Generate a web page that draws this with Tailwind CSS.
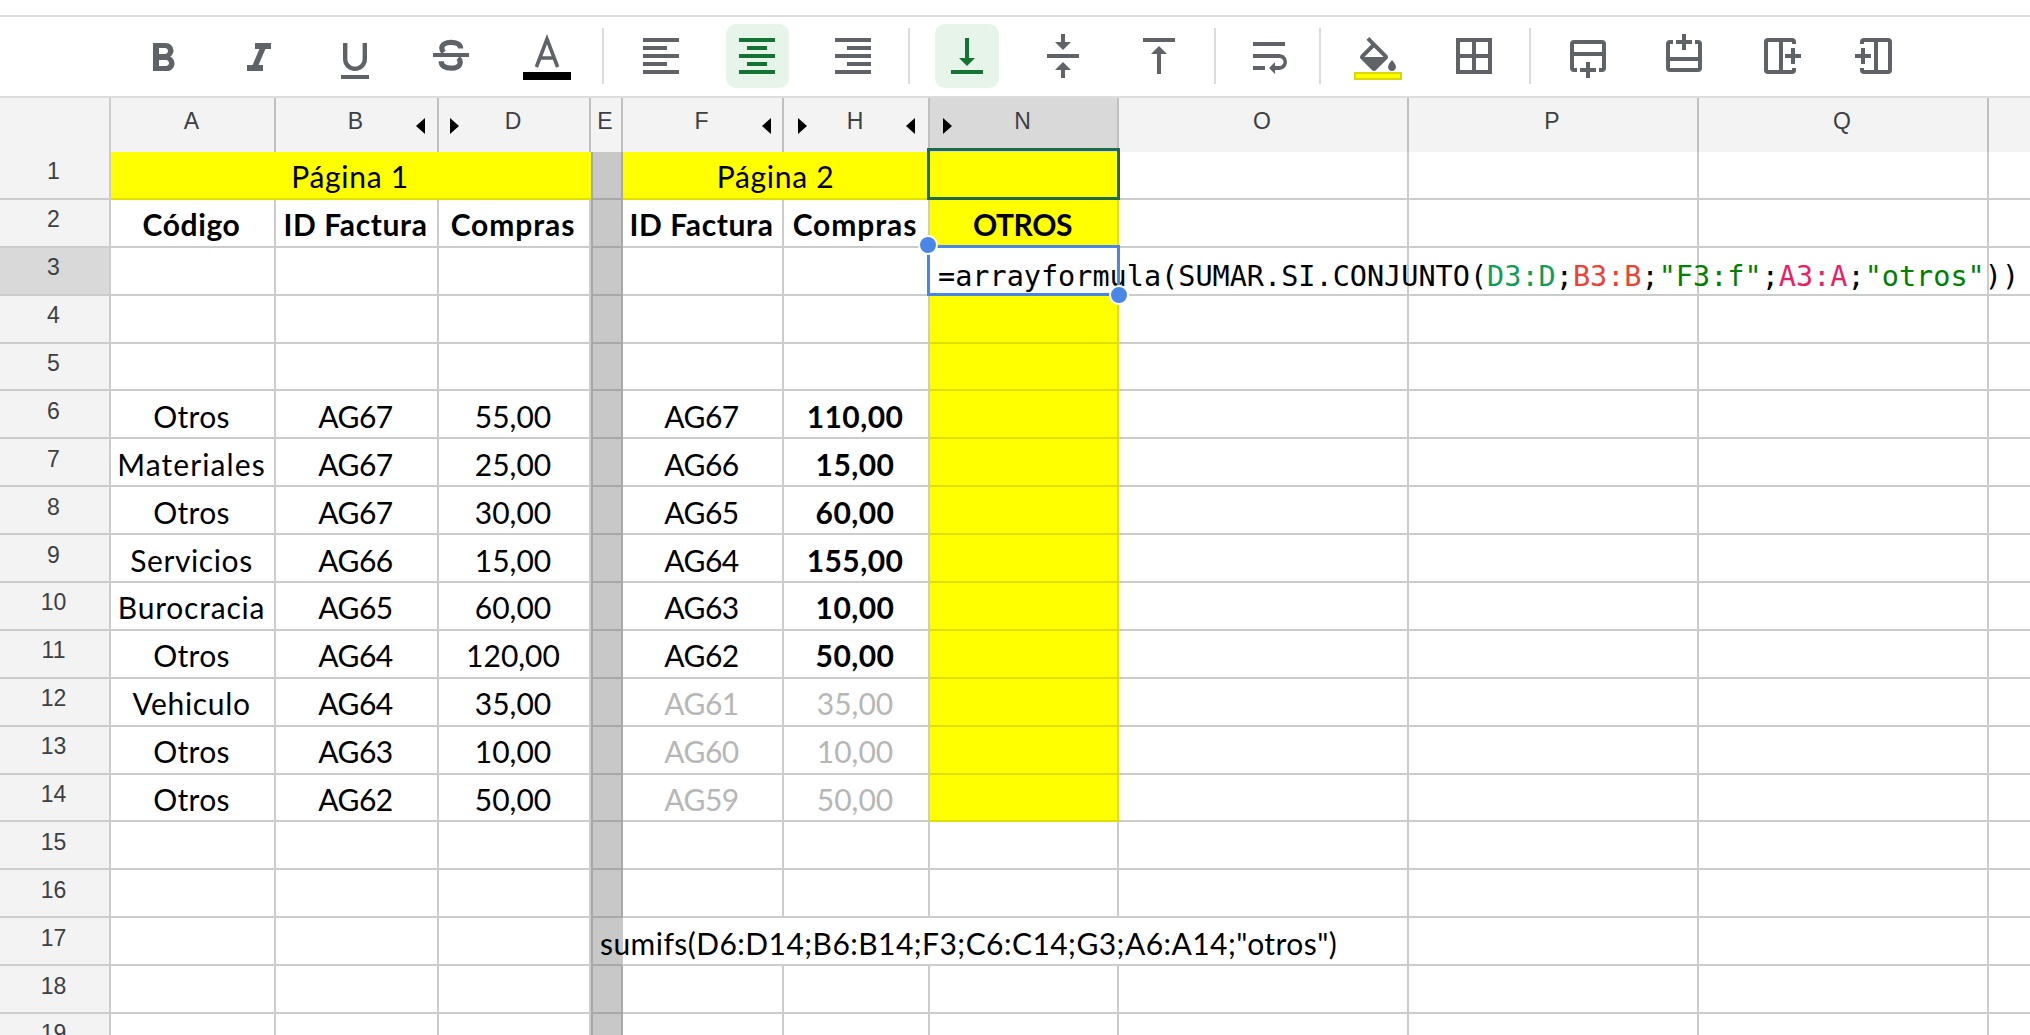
<!DOCTYPE html>
<html lang="es">
<head>
<meta charset="utf-8">
<script src="https://cdn.jsdelivr.net/npm/@tailwindcss/browser@4"></script>
<title>Hoja</title>
</head>
<body class="bg-white overflow-hidden font-['Lato','Carlito',sans-serif] text-black">
<div class="w-[2030px] h-[1035px] overflow-hidden flex flex-col">
  <div class="h-[15px] shrink-0"></div>
  <!-- toolbar -->
  <div class="h-[83px] shrink-0 border-y-2 border-[#dadce0] flex items-center pl-[115px] pb-[2px] text-[#5f6368] [&>span]:flex [&>span]:items-center [&>span]:justify-center [&>span]:h-[64px] [&>span]:w-[96px] [&_svg]:w-[48px] [&_svg]:h-[48px] [&_svg]:fill-current">
    <span><svg viewBox="0 0 24 24"><path transform="translate(0 1.5)" d="M15.6 10.79c.97-.67 1.65-1.77 1.65-2.79 0-2.26-1.75-4-4-4H7v14h7.04c2.09 0 3.71-1.7 3.71-3.79 0-1.52-.86-2.82-2.15-3.42zM10 6.5h3c.83 0 1.5.67 1.5 1.5s-.67 1.5-1.5 1.5h-3v-3zm3.5 9H10v-3h3.5c.83 0 1.5.67 1.5 1.5s-.67 1.5-1.5 1.5z"/></svg></span>
    <span><svg viewBox="0 0 24 24"><path transform="translate(0 1.5)" d="M10 4v3h2.21l-3.42 8H6v3h8v-3h-2.21l3.42-8H18V4z"/></svg></span>
    <span><svg viewBox="0 0 24 24"><path transform="translate(0 2.5)" d="M12 17c3.31 0 6-2.69 6-6V3h-2.2v8c0 2.1-1.7 3.8-3.8 3.8S8.2 13.1 8.2 11V3H6v8c0 3.31 2.69 6 6 6zm-7 2v2h14v-2H5z"/></svg></span>
    <span><svg viewBox="0 0 24 24"><path d="M3 10.5h18v2H3z"/><path class="fill-none stroke-current" stroke-width="2.6" d="M16.8 8.2C16.8 6 14.6 5.2 12 5.2 9.3 5.2 7.4 6.3 7.4 8c0 .8.3 1.4.9 2.2M15.6 13c.7.6 1 1.3 1 2.1 0 2-2 3-4.6 3-2.8 0-4.9-1.1-4.9-3.5"/></svg></span>
    <span><svg viewBox="0 0 24 24"><path class="fill-none stroke-current" stroke-width="1.8" d="M6.7 17.5 12 3.5l5.3 14M8.5 13h7"/><path class="fill-black" d="M0 20h24v4H0z"/></svg></span>
    <i class="block w-[2px] h-[56px] ml-[7px] mr-[9px] bg-[#dadce0]"></i>
    <span><svg viewBox="0 0 24 24"><path d="M15 15H3v2h12v-2zm0-8H3v2h12V7zM3 13h18v-2H3v2zm0 8h18v-2H3v2zM3 3v2h18V3H3z"/></svg></span>
    <span class="text-[#137333]"><b class="flex items-center justify-center w-[63px] h-[64px] rounded-[10px] bg-[#e6f4ea]"><svg viewBox="0 0 24 24"><path d="M7 15v2h10v-2H7zm-4 6h18v-2H3v2zm0-8h18v-2H3v2zm4-6v2h10V7H7zM3 3v2h18V3H3z"/></svg></b></span>
    <span><svg viewBox="0 0 24 24"><path d="M3 21h18v-2H3v2zm6-4h12v-2H9v2zm-6-4h18v-2H3v2zm6-4h12V7H9v2zM3 3v2h18V3H3z"/></svg></span>
    <i class="block w-[2px] h-[56px] ml-[7px] mr-[9px] bg-[#dadce0]"></i>
    <span class="text-[#137333]"><b class="flex items-center justify-center w-[64px] h-[64px] rounded-[10px] bg-[#e6f4ea]"><svg viewBox="0 0 24 24"><path d="M16 13h-3V3h-2v10H8l4 4 4-4zM4 19v2h16v-2H4z"/></svg></b></span>
    <span><svg viewBox="0 0 24 24"><path d="M8 19h3v4h2v-4h3l-4-4-4 4zm8-14h-3V1h-2v4H8l4 4 4-4zM4 11v2h16v-2H4z"/></svg></span>
    <span><svg viewBox="0 0 24 24"><path d="M8 11h3v10h2V11h3l-4-4-4 4zM4 3v2h16V3H4z"/></svg></span>
    <i class="block w-[2px] h-[56px] ml-[7px] mr-[9px] bg-[#dadce0]"></i>
    <span class="!w-[88px]"><svg viewBox="0 0 24 24"><path d="M4 19h6v-2H4v2zM20 5H4v2h16V5zm-3 6H4v2h13.25c1.1 0 2 .9 2 2s-.9 2-2 2H15v-2l-3 3 3 3v-2h2c2.21 0 4-1.79 4-4s-1.79-4-4-4z"/></svg></span>
    <i class="block w-[2px] h-[56px] ml-[6px] mr-[9px] bg-[#dadce0]"></i>
    <span><svg viewBox="0 0 24 24"><path transform="translate(0 2.5)" d="M16.56 8.94L7.62 0 6.21 1.41l2.38 2.38-5.15 5.15c-.59.59-.59 1.54 0 2.12l5.5 5.5c.29.29.68.44 1.06.44s.77-.15 1.06-.44l5.5-5.5c.59-.58.59-1.53 0-2.12zM5.21 10L10 5.21 14.79 10H5.21zM19 11.5s-2 2.17-2 3.5c0 1.1.9 2 2 2s2-.9 2-2c0-1.33-2-3.5-2-3.5z"/><path class="fill-[#ffff00] stroke-[#d8d800]" d="M.5 20.5h23v3H.5z"/></svg></span>
    <span><svg viewBox="0 0 24 24"><path d="M3 3v18h18V3H3zm8 16H5v-6h6v6zm0-8H5V5h6v6zm8 8h-6v-6h6v6zm0-8h-6V5h6v6z"/></svg></span>
    <i class="block w-[2px] h-[56px] ml-[7px] mr-[9px] bg-[#dadce0]"></i>
    <span><svg viewBox="0 0 24 24"><path class="fill-none stroke-current" stroke-width="2" d="M6.5 19H5a1 1 0 0 1-1-1V6a1 1 0 0 1 1-1h14a1 1 0 0 1 1 1v12a1 1 0 0 1-1 1h-1.5M4 11h16M12 15v8M8 19h8"/></svg></span>
    <span><svg viewBox="0 0 24 24"><path class="fill-none stroke-current" stroke-width="2" d="M6.5 5H5a1 1 0 0 0-1 1v12a1 1 0 0 0 1 1h14a1 1 0 0 0 1-1V6a1 1 0 0 0-1-1h-1.5M4 13.5h16M12 1v8M8 5h8"/></svg></span>
    <span><svg viewBox="0 0 24 24"><path class="fill-none stroke-current" stroke-width="2" d="M19 6V5a1 1 0 0 0-1-1H6a1 1 0 0 0-1 1v14a1 1 0 0 0 1 1h12a1 1 0 0 0 1-1v-1M12.5 4v16M14.5 12h8M18.5 8v8"/></svg></span>
    <span><svg viewBox="0 0 24 24"><path class="fill-none stroke-current" stroke-width="2" d="M5 6V5a1 1 0 0 1 1-1h12a1 1 0 0 1 1 1v14a1 1 0 0 1-1 1H6a1 1 0 0 1-1-1v-1M12 4v16M1.5 12h8M5.5 8v8"/></svg></span>
  </div>
  <!-- sheet -->
  <div class="relative grid grid-cols-[111px_165px_163px_152px_32px_161px_146px_189px_290px_290px_290px_41px] grid-rows-[54px_repeat(19,47.9px)] text-[30px] leading-none [&>div]:flex [&>div]:items-center [&>div]:justify-center [&>div]:border-r-2 [&>div]:border-b-2 [&>div]:border-[#cccccc] [&>div]:pt-[3px] [&>div]:pr-[2px] [&>div]:whitespace-nowrap">
    <!-- headers -->
    <div class="bg-[#f3f3f3] !border-b-0"></div>
    <div class="bg-[#f3f3f3] !border-b-0 !pt-0 pb-[7px] font-['Liberation_Sans'] text-[23px] text-[#3c4043] !border-[#c0c0c0]">A</div>
    <div class="bg-[#f3f3f3] !border-b-0 !pt-0 pb-[7px] font-['Liberation_Sans'] text-[23px] text-[#3c4043] !border-[#c0c0c0] relative">B<i class="absolute right-[12px] top-[20px] border-y-[8px] border-y-transparent border-r-[9px] border-r-black"></i></div>
    <div class="bg-[#f3f3f3] !border-b-0 !pt-0 pb-[7px] font-['Liberation_Sans'] text-[23px] text-[#3c4043] !border-[#c0c0c0] relative">D<i class="absolute left-[11px] top-[20px] border-y-[8px] border-y-transparent border-l-[9px] border-l-black"></i></div>
    <div class="bg-[#f3f3f3] !border-b-0 !pt-0 pb-[7px] font-['Liberation_Sans'] text-[23px] text-[#3c4043] !border-[#c0c0c0]">E</div>
    <div class="bg-[#f3f3f3] !border-b-0 !pt-0 pb-[7px] font-['Liberation_Sans'] text-[23px] text-[#3c4043] !border-[#c0c0c0] relative">F<i class="absolute right-[11px] top-[20px] border-y-[8px] border-y-transparent border-r-[9px] border-r-black"></i></div>
    <div class="bg-[#f3f3f3] !border-b-0 !pt-0 pb-[7px] font-['Liberation_Sans'] text-[23px] text-[#3c4043] !border-[#c0c0c0] relative">H<i class="absolute left-[14px] top-[20px] border-y-[8px] border-y-transparent border-l-[9px] border-l-black"></i><i class="absolute right-[13px] top-[20px] border-y-[8px] border-y-transparent border-r-[9px] border-r-black"></i></div>
    <div class="bg-[#d9d9d9] !border-b-0 !pt-0 pb-[7px] font-['Liberation_Sans'] text-[23px] text-[#3c4043] !border-[#c0c0c0] relative">N<i class="absolute left-[13px] top-[20px] border-y-[8px] border-y-transparent border-l-[9px] border-l-black"></i></div>
    <div class="bg-[#f3f3f3] !border-b-0 !pt-0 pb-[7px] font-['Liberation_Sans'] text-[23px] text-[#3c4043] !border-[#c0c0c0]">O</div>
    <div class="bg-[#f3f3f3] !border-b-0 !pt-0 pb-[7px] font-['Liberation_Sans'] text-[23px] text-[#3c4043] !border-[#c0c0c0]">P</div>
    <div class="bg-[#f3f3f3] !border-b-0 !pt-0 pb-[7px] font-['Liberation_Sans'] text-[23px] text-[#3c4043] !border-[#c0c0c0]">Q</div>
    <div class="bg-[#f3f3f3] !border-b-0 !border-r-0"></div>

    <!-- row 1 -->
    <div class="bg-[#f3f3f3] !pt-0 pb-[6px] font-['Liberation_Sans'] text-[23px] text-[#3c4043]">1</div>
    <div class="col-span-3 bg-[#ffff00] !border-[#e0e000] !border-r-0 tracking-[0.7px]">Página 1</div>
    <div class="bg-[#c8c8c8] !border-l-2 !border-[#a8a8a8]"></div>
    <div class="col-span-2 bg-[#ffff00] !border-[#e0e000] !border-r-0 tracking-[0.7px]">Página 2</div>
    <div class="bg-[#ffff00] !border-[#e0e000]"></div>
    <div></div><div></div><div></div><div class="!border-r-0"></div>

    <!-- row 2 -->
    <div class="bg-[#f3f3f3] !pt-0 pb-[6px] font-['Liberation_Sans'] text-[23px] text-[#3c4043]">2</div>
    <div class="font-bold tracking-[0.6px]">Código</div>
    <div class="font-bold tracking-[0.6px]">ID Factura</div>
    <div class="font-bold tracking-[0.9px]">Compras</div>
    <div class="bg-[#c8c8c8] !border-l-2 !border-[#a8a8a8]"></div>
    <div class="font-bold tracking-[0.6px]">ID Factura</div>
    <div class="font-bold tracking-[0.9px]">Compras</div>
    <div class="font-bold tracking-[-0.4px] bg-[#ffff00] !border-[#e0e000]">OTROS</div>
    <div></div><div></div><div></div><div class="!border-r-0"></div>

    <!-- row 3 -->
    <div class="bg-[#d9d9d9] !pt-0 pb-[6px] font-['Liberation_Sans'] text-[23px] text-[#3c4043]">3</div>
    <div></div><div></div><div></div>
    <div class="bg-[#c8c8c8] !border-l-2 !border-[#a8a8a8]"></div>
    <div></div><div></div>
    <div class="!justify-start pl-[8px] !pt-[14px] font-['DejaVu_Sans_Mono'] text-[28.5px] relative z-10">=arrayformula(SUMAR.SI.CONJUNTO(<span class="text-[#0f9d58]">D3:D</span>;<span class="text-[#ea4335]">B3:B</span>;<span class="text-[#008000]">"F3:f"</span>;<span class="text-[#e91e63]">A3:A</span>;<span class="text-[#008000]">"otros"</span>))</div>
    <div></div><div></div><div></div><div class="!border-r-0"></div>

    <!-- row 4 -->
    <div class="bg-[#f3f3f3] !pt-0 pb-[6px] font-['Liberation_Sans'] text-[23px] text-[#3c4043]">4</div>
    <div></div><div></div><div></div>
    <div class="bg-[#c8c8c8] !border-l-2 !border-[#a8a8a8]"></div>
    <div></div><div></div>
    <div class="bg-[#ffff00] !border-[#e0e000]"></div>
    <div></div><div></div><div></div><div class="!border-r-0"></div>

    <!-- row 5 -->
    <div class="bg-[#f3f3f3] !pt-0 pb-[6px] font-['Liberation_Sans'] text-[23px] text-[#3c4043]">5</div>
    <div></div><div></div><div></div>
    <div class="bg-[#c8c8c8] !border-l-2 !border-[#a8a8a8]"></div>
    <div></div><div></div>
    <div class="bg-[#ffff00] !border-[#e0e000]"></div>
    <div></div><div></div><div></div><div class="!border-r-0"></div>

    <!-- row 6 -->
    <div class="bg-[#f3f3f3] !pt-0 pb-[6px] font-['Liberation_Sans'] text-[23px] text-[#3c4043]">6</div>
    <div class="tracking-[0.3px]">Otros</div><div class="tracking-[-0.5px]">AG67</div><div>55,00</div>
    <div class="bg-[#c8c8c8] !border-l-2 !border-[#a8a8a8]"></div>
    <div class="tracking-[-0.5px]">AG67</div><div class="font-bold tracking-[0.45px]">110,00</div>
    <div class="bg-[#ffff00] !border-[#e0e000]"></div>
    <div></div><div></div><div></div><div class="!border-r-0"></div>

    <!-- row 7 -->
    <div class="bg-[#f3f3f3] !pt-0 pb-[6px] font-['Liberation_Sans'] text-[23px] text-[#3c4043]">7</div>
    <div class="tracking-[1.1px]">Materiales</div><div class="tracking-[-0.5px]">AG67</div><div>25,00</div>
    <div class="bg-[#c8c8c8] !border-l-2 !border-[#a8a8a8]"></div>
    <div class="tracking-[-0.5px]">AG66</div><div class="font-bold tracking-[0.45px]">15,00</div>
    <div class="bg-[#ffff00] !border-[#e0e000]"></div>
    <div></div><div></div><div></div><div class="!border-r-0"></div>

    <!-- row 8 -->
    <div class="bg-[#f3f3f3] !pt-0 pb-[6px] font-['Liberation_Sans'] text-[23px] text-[#3c4043]">8</div>
    <div class="tracking-[0.3px]">Otros</div><div class="tracking-[-0.5px]">AG67</div><div>30,00</div>
    <div class="bg-[#c8c8c8] !border-l-2 !border-[#a8a8a8]"></div>
    <div class="tracking-[-0.5px]">AG65</div><div class="font-bold tracking-[0.45px]">60,00</div>
    <div class="bg-[#ffff00] !border-[#e0e000]"></div>
    <div></div><div></div><div></div><div class="!border-r-0"></div>

    <!-- row 9 -->
    <div class="bg-[#f3f3f3] !pt-0 pb-[6px] font-['Liberation_Sans'] text-[23px] text-[#3c4043]">9</div>
    <div class="tracking-[0.6px]">Servicios</div><div class="tracking-[-0.5px]">AG66</div><div>15,00</div>
    <div class="bg-[#c8c8c8] !border-l-2 !border-[#a8a8a8]"></div>
    <div class="tracking-[-0.5px]">AG64</div><div class="font-bold tracking-[0.45px]">155,00</div>
    <div class="bg-[#ffff00] !border-[#e0e000]"></div>
    <div></div><div></div><div></div><div class="!border-r-0"></div>

    <!-- row 10 -->
    <div class="bg-[#f3f3f3] !pt-0 pb-[6px] font-['Liberation_Sans'] text-[23px] text-[#3c4043]">10</div>
    <div class="tracking-[0.8px]">Burocracia</div><div class="tracking-[-0.5px]">AG65</div><div>60,00</div>
    <div class="bg-[#c8c8c8] !border-l-2 !border-[#a8a8a8]"></div>
    <div class="tracking-[-0.5px]">AG63</div><div class="font-bold tracking-[0.45px]">10,00</div>
    <div class="bg-[#ffff00] !border-[#e0e000]"></div>
    <div></div><div></div><div></div><div class="!border-r-0"></div>

    <!-- row 11 -->
    <div class="bg-[#f3f3f3] !pt-0 pb-[6px] font-['Liberation_Sans'] text-[23px] text-[#3c4043]">11</div>
    <div class="tracking-[0.3px]">Otros</div><div class="tracking-[-0.5px]">AG64</div><div>120,00</div>
    <div class="bg-[#c8c8c8] !border-l-2 !border-[#a8a8a8]"></div>
    <div class="tracking-[-0.5px]">AG62</div><div class="font-bold tracking-[0.45px]">50,00</div>
    <div class="bg-[#ffff00] !border-[#e0e000]"></div>
    <div></div><div></div><div></div><div class="!border-r-0"></div>

    <!-- row 12 -->
    <div class="bg-[#f3f3f3] !pt-0 pb-[6px] font-['Liberation_Sans'] text-[23px] text-[#3c4043]">12</div>
    <div class="tracking-[0.65px]">Vehiculo</div><div class="tracking-[-0.5px]">AG64</div><div>35,00</div>
    <div class="bg-[#c8c8c8] !border-l-2 !border-[#a8a8a8]"></div>
    <div class="text-[#b7b7b7] tracking-[-0.5px]">AG61</div><div class="text-[#b7b7b7]">35,00</div>
    <div class="bg-[#ffff00] !border-[#e0e000]"></div>
    <div></div><div></div><div></div><div class="!border-r-0"></div>

    <!-- row 13 -->
    <div class="bg-[#f3f3f3] !pt-0 pb-[6px] font-['Liberation_Sans'] text-[23px] text-[#3c4043]">13</div>
    <div class="tracking-[0.3px]">Otros</div><div class="tracking-[-0.5px]">AG63</div><div>10,00</div>
    <div class="bg-[#c8c8c8] !border-l-2 !border-[#a8a8a8]"></div>
    <div class="text-[#b7b7b7] tracking-[-0.5px]">AG60</div><div class="text-[#b7b7b7]">10,00</div>
    <div class="bg-[#ffff00] !border-[#e0e000]"></div>
    <div></div><div></div><div></div><div class="!border-r-0"></div>

    <!-- row 14 -->
    <div class="bg-[#f3f3f3] !pt-0 pb-[6px] font-['Liberation_Sans'] text-[23px] text-[#3c4043]">14</div>
    <div class="tracking-[0.3px]">Otros</div><div class="tracking-[-0.5px]">AG62</div><div>50,00</div>
    <div class="bg-[#c8c8c8] !border-l-2 !border-[#a8a8a8]"></div>
    <div class="text-[#b7b7b7] tracking-[-0.5px]">AG59</div><div class="text-[#b7b7b7]">50,00</div>
    <div class="bg-[#ffff00] !border-[#e0e000]"></div>
    <div></div><div></div><div></div><div class="!border-r-0"></div>

    <!-- row 15 -->
    <div class="bg-[#f3f3f3] !pt-0 pb-[6px] font-['Liberation_Sans'] text-[23px] text-[#3c4043]">15</div>
    <div></div><div></div><div></div>
    <div class="bg-[#c8c8c8] !border-l-2 !border-[#a8a8a8]"></div>
    <div></div><div></div><div></div>
    <div></div><div></div><div></div><div class="!border-r-0"></div>

    <!-- row 16 -->
    <div class="bg-[#f3f3f3] !pt-0 pb-[6px] font-['Liberation_Sans'] text-[23px] text-[#3c4043]">16</div>
    <div></div><div></div><div></div>
    <div class="bg-[#c8c8c8] !border-l-2 !border-[#a8a8a8]"></div>
    <div></div><div></div><div></div>
    <div></div><div></div><div></div><div class="!border-r-0"></div>

    <!-- row 17 -->
    <div class="bg-[#f3f3f3] !pt-0 pb-[6px] font-['Liberation_Sans'] text-[23px] text-[#3c4043]">17</div>
    <div></div><div></div><div></div>
    <div class="bg-[#c8c8c8] !border-l-2 !border-[#a8a8a8] !border-r-[#c8c8c8] !justify-start pl-[7px] relative z-10 tracking-[0.45px]">sumifs(D6:D14;B6:B14;F3;C6:C14;G3;A6:A14;"otros")</div>
    <div class="!border-r-0"></div><div class="!border-r-0"></div><div class="!border-r-0"></div>
    <div></div><div></div><div></div><div class="!border-r-0"></div>

    <!-- row 18 -->
    <div class="bg-[#f3f3f3] !pt-0 pb-[6px] font-['Liberation_Sans'] text-[23px] text-[#3c4043]">18</div>
    <div></div><div></div><div></div>
    <div class="bg-[#c8c8c8] !border-l-2 !border-[#a8a8a8]"></div>
    <div></div><div></div><div></div>
    <div></div><div></div><div></div><div class="!border-r-0"></div>

    <!-- row 19 -->
    <div class="bg-[#f3f3f3] !pt-0 pb-[6px] font-['Liberation_Sans'] text-[23px] text-[#3c4043]">19</div>
    <div></div><div></div><div></div>
    <div class="bg-[#c8c8c8] !border-l-2 !border-[#a8a8a8]"></div>
    <div></div><div></div><div></div>
    <div></div><div></div><div></div><div class="!border-r-0"></div>

    <!-- selection overlays -->
    <div class="absolute !block left-[927px] top-[50px] w-[193px] h-[52px] !border-[3px] !border-[#1e6b4a] z-20"></div>
    <div class="absolute !block left-[927px] top-[147px] w-[193px] h-[51px] !border-[3px] !border-[#4a86e8] z-20"></div>
    <i class="absolute block left-[918px] top-[137px] w-[20px] h-[20px] rounded-full bg-[#4a86e8] border-[2px] border-white z-30"></i>
    <i class="absolute block left-[1109px] top-[187px] w-[20px] h-[20px] rounded-full bg-[#4a86e8] border-[2px] border-white z-30"></i>
  </div>
</div>
</body>
</html>
